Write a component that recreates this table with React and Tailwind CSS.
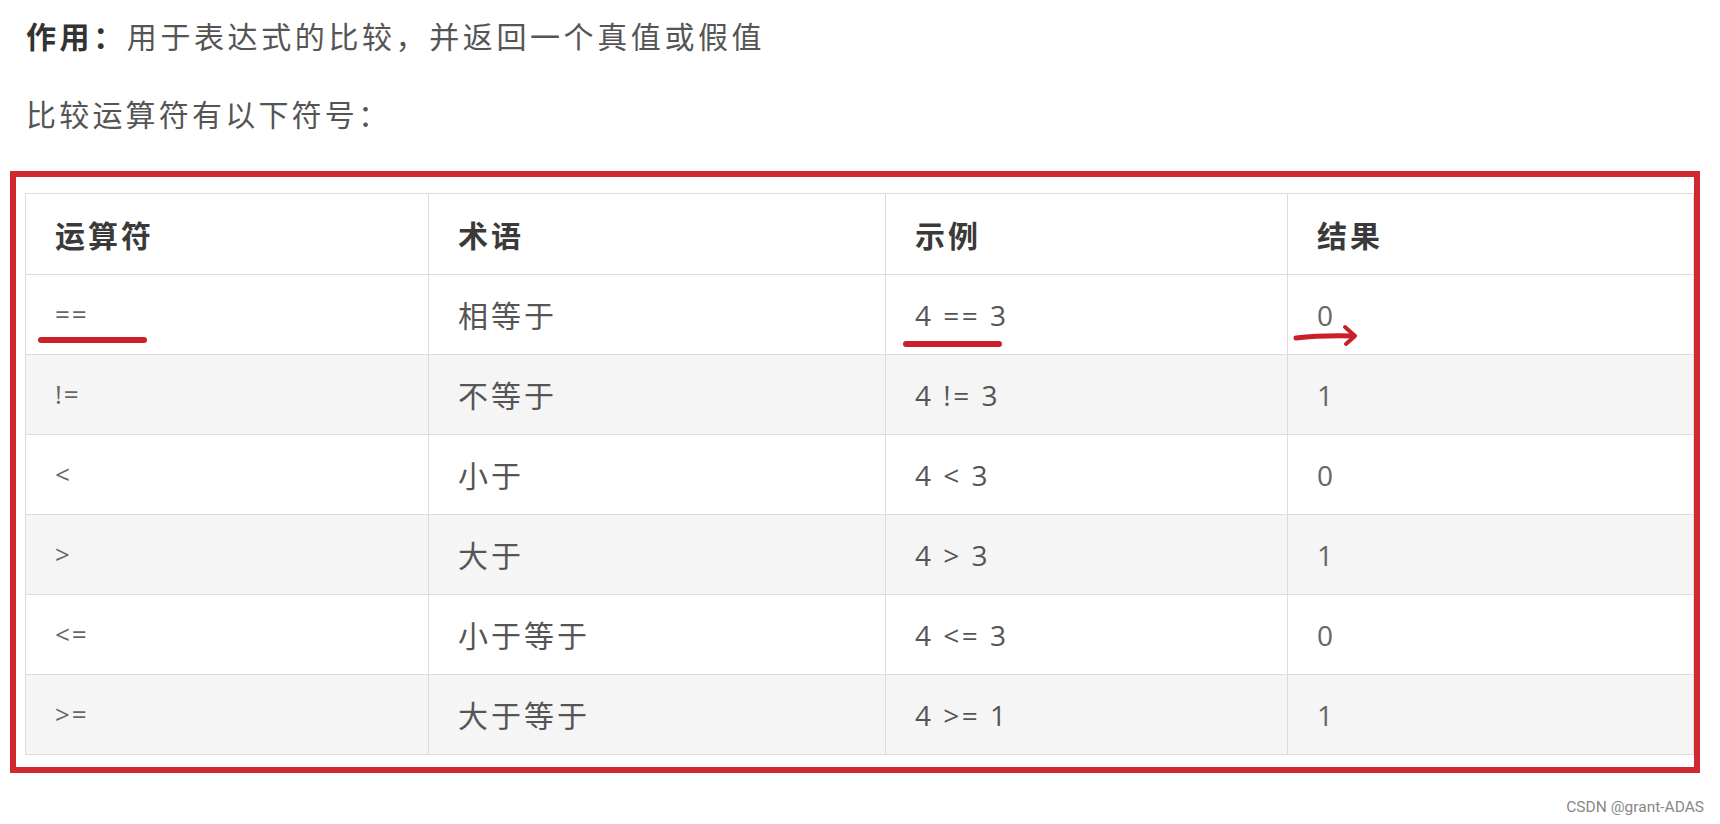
import React from 'react';

const rows = [
  { op: '==', term: '相等于', example: '4 == 3', result: '0' },
  { op: '!=', term: '不等于', example: '4 != 3', result: '1' },
  { op: '<', term: '小于', example: '4 < 3', result: '0' },
  { op: '>', term: '大于', example: '4 > 3', result: '1' },
  { op: '<=', term: '小于等于', example: '4 <= 3', result: '0' },
  { op: '>=', term: '大于等于', example: '4 >= 1', result: '1' },
];

const cjk = "font-['Noto_Sans_CJK_SC','Noto_Sans',sans-serif]";
const num = "font-['Open_Sans','Noto_Sans_CJK_SC',sans-serif]";

function App() {
  return (
    <div className="relative w-full h-[824px] bg-white overflow-hidden">
      {/* intro lines */}
      <div className="pt-[15px] pl-[26px]">
        <p className={`${cjk} text-[30px] leading-[40px] tracking-[3.6px] text-[#555]`}>
          <span className="font-bold text-[#333]">作用：</span>用于表达式的比较，并返回一个真值或假值
        </p>
        <p className={`${cjk} mt-[38px] text-[30px] leading-[40px] tracking-[3.2px] text-[#555]`}>
          比较运算符有以下符号：
        </p>
      </div>

      {/* hand-drawn red frame round the table */}
      <div className="mt-[38px] ml-[10px] w-[1690px] border-[6px] border-[#d0282e] pt-[16px] pl-[9px] pr-[1px] pb-[12px]">
        <table className="w-[1668px] table-fixed border-collapse">
          <colgroup>
            <col className="w-[403px]" />
            <col className="w-[457px]" />
            <col className="w-[402px]" />
            <col className="w-[406px]" />
          </colgroup>
          <thead>
            <tr className="h-[81px] bg-white">
              {['运算符', '术语', '示例', '结果'].map(h => (
                <th
                  key={h}
                  className={`${cjk} border border-[#dcdcdc] pl-[29px] text-left align-middle text-[30px] font-bold tracking-[3px] text-[#3a3a3a]`}
                >
                  {h}
                </th>
              ))}
            </tr>
          </thead>
          <tbody>
            {rows.map((r, i) => (
              <tr key={r.op} className={i % 2 === 1 ? 'h-[80px] bg-[#f5f5f5]' : 'h-[80px] bg-white'}>
                <td className={`${num} border border-[#dcdcdc] pl-[29px] align-middle text-[26px] tracking-[2px] text-[#666]`}>{r.op}</td>
                <td className={`${cjk} border border-[#dcdcdc] pl-[29px] align-middle text-[30px] tracking-[3px] text-[#555]`}>{r.term}</td>
                <td className={`${num} border border-[#dcdcdc] pl-[29px] align-middle text-[28px] tracking-[2.5px] text-[#555]`}>{r.example}</td>
                <td className={`${num} border border-[#dcdcdc] pl-[29px] align-middle text-[28px] text-[#666]`}>{r.result}</td>
              </tr>
            ))}
          </tbody>
        </table>
      </div>

      {/* watermark */}
      <div className="mt-[24px] w-[1704px] text-right font-['Roboto','Liberation_Sans',sans-serif] text-[15.5px] leading-[20px] text-[#888]">
        CSDN @grant-ADAS
      </div>

      {/* red pen marks */}
      <div className="absolute left-[38px] top-[337px] h-[6px] w-[109px] rounded-full bg-[#c9202b]" />
      <div className="absolute left-[903px] top-[341px] h-[6px] w-[99px] rounded-full bg-[#c9202b]" />
      <svg className="absolute left-[1292px] top-[318px]" width="70" height="32" viewBox="0 0 70 32">
        <path d="M4 20 Q30 17 62 18" stroke="#c9202b" strokeWidth="5" strokeLinecap="round" fill="none" />
        <path d="M53 9 L63 18 L54 26" stroke="#c9202b" strokeWidth="4" strokeLinecap="round" strokeLinejoin="round" fill="none" />
      </svg>
    </div>
  );
}

export default App;
